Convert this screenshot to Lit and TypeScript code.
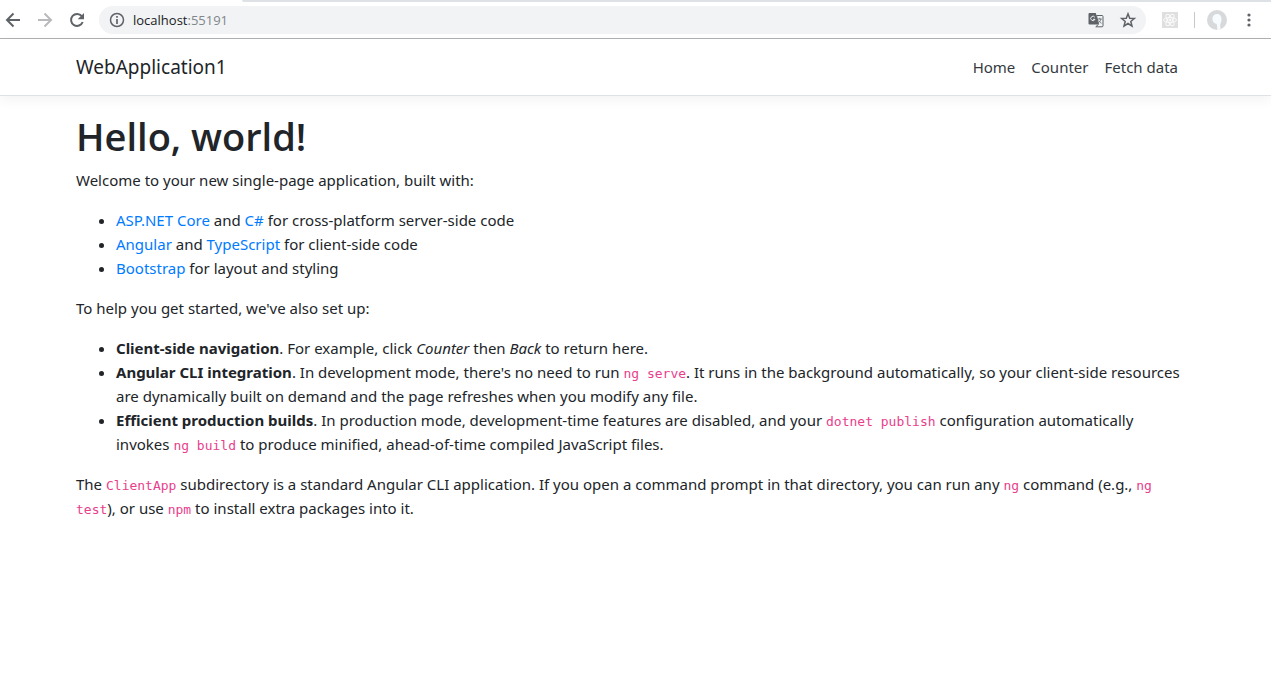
import { LitElement, html, css } from "lit";
import { customElement } from "lit/decorators.js";

@customElement("browser-bar")
export class BrowserBar extends LitElement {
  static styles = css`
    :host {
      display: block;
      font-family: "Segoe UI", "Open Sans", sans-serif;
      font-size: 13px;
      line-height: 20px;
      color: #5f6368;
      background: #fff;
      border-bottom: 1px solid #b0b1b3;
    }
    .tabs {
      display: flex;
      height: 2px;
    }
    .active-tab {
      flex: 0 0 242px;
    }
    .strip {
      flex: 1;
      background: #dee1e6;
      border-bottom-left-radius: 4px;
    }
    .row {
      display: flex;
      align-items: center;
      height: 36px;
      padding: 0 13px 0 3px;
    }
    button {
      display: flex;
      padding: 0;
      border: 0;
      background: none;
      color: inherit;
    }
    button:disabled {
      color: #bababc;
    }
    svg {
      display: block;
    }
    .nav {
      display: flex;
      gap: 12px;
    }
    .omnibox {
      display: flex;
      flex: 1;
      align-items: center;
      height: 28px;
      margin: 0 15px 0 12px;
      padding: 0 9px;
      border-radius: 14px;
      background: #f1f3f4;
    }
    .address {
      flex: 1;
      padding-left: 7px;
    }
    .host {
      color: #202124;
    }
    .port {
      color: #80868b;
    }
    .actions {
      display: flex;
      gap: 14px;
    }
    .tools {
      display: flex;
      align-items: center;
    }
    .divider {
      width: 1px;
      height: 16px;
      margin: 0 12px 0 15px;
      background: #c6c8ca;
    }
    .menu {
      margin-left: 13px;
    }
  `;

  render() {
    return html`
      <div class="tabs"><div class="active-tab"></div><div class="strip"></div></div>
      <div class="row">
        <div class="nav">
          <button aria-label="Back">
            <svg width="20" height="20" viewBox="0 0 20 20" fill="none" stroke="currentColor" stroke-width="2"><path d="M17 10H4.500M10.500 3.500 4 10l6.500 6.500" /></svg>
          </button>
          <button aria-label="Forward" disabled>
            <svg width="20" height="20" viewBox="0 0 20 20" fill="none" stroke="currentColor" stroke-width="2"><path d="M3 10h12.500M9.500 3.500 16 10l-6.500 6.500" /></svg>
          </button>
          <button aria-label="Reload">
            <svg width="20" height="20" viewBox="0 0 20 20" fill="none" stroke="currentColor" stroke-width="2"><path d="M14.800 6.200A6 6 0 1 0 15.700 12" /><path d="M17 3v6.300h-6.300z" fill="currentColor" stroke="none" /></svg>
          </button>
        </div>
        <div class="omnibox">
          <button aria-label="Site information">
            <svg width="18" height="18" viewBox="0 0 18 18" fill="none" stroke="currentColor" stroke-width="1.500"><circle cx="9" cy="9" r="6.500" /><path d="M9 8v5M9 5v1.700" stroke-width="1.700" /></svg>
          </button>
          <div class="address"><span class="host">localhost</span><span class="port">:55191</span></div>
          <div class="actions">
            <button aria-label="Translate this page">
              <svg width="18" height="18" viewBox="0 0 18 18"><path d="M2.500 2h6.300l3.200 11.500H2.500a1 1 0 0 1-1-1V3a1 1 0 0 1 1-1z" fill="#5f6368" /><path d="M9.500 4.500h5.500a1 1 0 0 1 1 1v9.300a1 1 0 0 1-1 1H8.800l2.700-2.500z" fill="#f1f3f4" stroke="#5f6368" /><path d="M7.800 6.200A2.200 2.200 0 1 0 8 8.300H6" fill="none" stroke="#f1f3f4" /><path d="M10.800 8h4M12.800 6.800V8M14 8c-.500 2-1.500 3-2.800 4M11.700 9.500c.800 1.500 1.500 2 2.800 2.800" fill="none" stroke="#5f6368" stroke-width=".800" /></svg>
            </button>
            <button aria-label="Bookmark this page">
              <svg width="18" height="18" viewBox="0 0 18 18" fill="none" stroke="currentColor" stroke-width="1.500"><path d="m9 2.800 1.700 4.400 4.700.300-3.600 3 1.200 4.600-4-2.600-4 2.600 1.200-4.600-3.600-3 4.700-.300z" /></svg>
            </button>
          </div>
        </div>
        <div class="tools">
          <button aria-label="React Developer Tools">
            <svg width="18" height="18" viewBox="0 0 18 18" fill="none" stroke="#fafafa"><path d="M1 1h16v16H1z" fill="#dfdfdf" stroke="none" /><ellipse cx="9" cy="9" rx="6.500" ry="2.500" /><ellipse cx="9" cy="9" rx="6.500" ry="2.500" transform="rotate(60 9 9)" /><ellipse cx="9" cy="9" rx="6.500" ry="2.500" transform="rotate(120 9 9)" /><circle cx="9" cy="9" r="1" fill="#fafafa" /></svg>
          </button>
          <div class="divider"></div>
          <button aria-label="Profile">
            <svg width="20" height="20" viewBox="0 0 20 20"><circle cx="10" cy="10" r="10" fill="#d8d9db" /><path d="M10 4c3 0 4.500 2 4.500 5s-1 4-1.300 5.500c-.200 2 .300 3.500.300 4.800a10 10 0 0 1-3.500.600c.500-2 .200-4-.300-5.900C6.500 13 5.500 11.500 5.500 9S7 4 10 4z" fill="#f8fbfd" /></svg>
          </button>
          <button class="menu" aria-label="Menu">
            <svg width="18" height="18" viewBox="0 0 18 18" fill="currentColor"><circle cx="9" cy="4" r="1.600" /><circle cx="9" cy="9" r="1.600" /><circle cx="9" cy="14" r="1.600" /></svg>
          </button>
        </div>
      </div>
    `;
  }
}

@customElement("app-root")
export class AppRoot extends LitElement {
  static styles = css`
    :host {
      display: block;
      min-height: 100vh;
      background: #fff;
      color: #212529;
      font-family: "Segoe UI", "Noto Sans", sans-serif;
      font-size: 15px;
      line-height: 24px;
    }
    header {
      padding: 8px 9px 8px 0;
      border-bottom: 1px solid #dee2e6;
      box-shadow: 0 4px 12px rgba(0, 0, 0, 0.05);
    }
    .container {
      box-sizing: border-box;
      max-width: 1140px;
      margin: 0 auto;
      padding: 0 15px;
    }
    .navbar {
      display: flex;
      align-items: center;
      justify-content: space-between;
    }
    .brand {
      font-size: 19px;
      line-height: 32px;
      color: #212529;
    }
    .links {
      display: flex;
      margin: 0;
      padding: 0;
      list-style: none;
    }
    .links a {
      display: block;
      padding: 8px;
      color: #343a40;
    }
    a {
      color: #007bff;
      text-decoration: none;
    }
    main {
      padding: 16px 9px 0 0;
    }
    h1 {
      margin: 0 0 8px;
      font-family: "Segoe UI", "Open Sans", sans-serif;
      font-size: 38px;
      font-weight: 600;
      line-height: 48px;
    }
    p,
    main ul {
      margin: 0 0 16px;
    }
    main ul {
      padding-left: 40px;
    }
    code {
      font-family: Consolas, "DejaVu Sans Mono", monospace;
      font-size: 13px;
      line-height: 20px;
      color: #e83e8c;
    }
  `;

  render() {
    return html`
      <browser-bar></browser-bar>
      <header>
        <nav class="container navbar">
          <a class="brand" href="/">WebApplication1</a>
          <ul class="links">
            <li><a href="/">Home</a></li>
            <li><a href="/counter">Counter</a></li>
            <li><a href="/fetch-data">Fetch data</a></li>
          </ul>
        </nav>
      </header>
      <main>
        <div class="container">
          <h1>Hello, world!</h1>
          <p>Welcome to your new single-page application, built with:</p>
          <ul>
            <li><a href="https://get.asp.net/">ASP.NET Core</a> and <a href="https://docs.microsoft.com/dotnet/csharp/">C#</a> for cross-platform server-side code</li>
            <li><a href="https://angular.io/">Angular</a> and <a href="http://www.typescriptlang.org/">TypeScript</a> for client-side code</li>
            <li><a href="http://getbootstrap.com/">Bootstrap</a> for layout and styling</li>
          </ul>
          <p>To help you get started, we've also set up:</p>
          <ul>
            <li><strong>Client-side navigation</strong>. For example, click <em>Counter</em> then <em>Back</em> to return here.</li>
            <li><strong>Angular CLI integration</strong>. In development mode, there's no need to run <code>ng serve</code>. It runs in the background automatically, so your client-side resources are dynamically built on demand and the page refreshes when you modify any file.</li>
            <li><strong>Efficient production builds</strong>. In production mode, development-time features are disabled, and your <code>dotnet publish</code> configuration automatically invokes <code>ng build</code> to produce minified, ahead-of-time compiled JavaScript files.</li>
          </ul>
          <p>The <code>ClientApp</code> subdirectory is a standard Angular CLI application. If you open a command prompt in that directory, you can run any <code>ng</code> command (e.g., <code>ng test</code>), or use <code>npm</code> to install extra packages into it.</p>
        </div>
      </main>
    `;
  }
}
